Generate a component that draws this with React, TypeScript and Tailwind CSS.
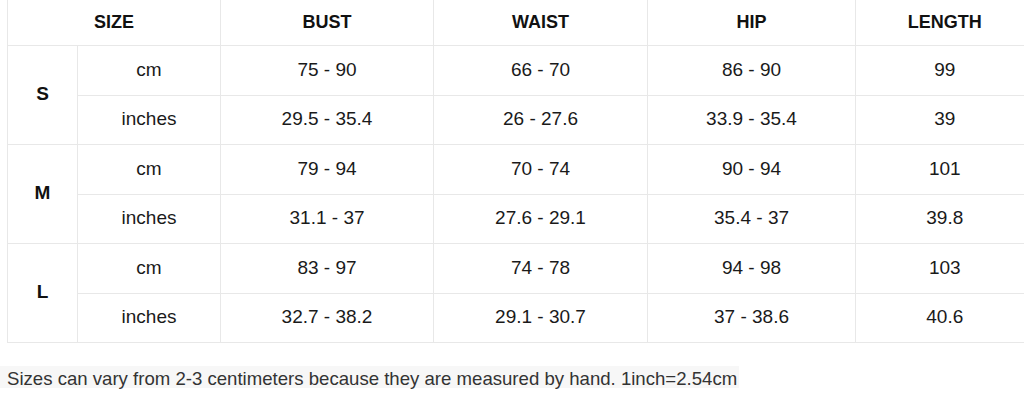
import React from "react";

type Row = {
  unit: string;
  bust: string;
  waist: string;
  hip: string;
  length: string;
};

type SizeGroup = {
  size: string;
  rows: Row[];
};

const sizes: SizeGroup[] = [
  {
    size: "S",
    rows: [
      { unit: "cm", bust: "75 - 90", waist: "66 - 70", hip: "86 - 90", length: "99" },
      { unit: "inches", bust: "29.5 - 35.4", waist: "26 - 27.6", hip: "33.9 - 35.4", length: "39" },
    ],
  },
  {
    size: "M",
    rows: [
      { unit: "cm", bust: "79 - 94", waist: "70 - 74", hip: "90 - 94", length: "101" },
      { unit: "inches", bust: "31.1 - 37", waist: "27.6 - 29.1", hip: "35.4 - 37", length: "39.8" },
    ],
  },
  {
    size: "L",
    rows: [
      { unit: "cm", bust: "83 - 97", waist: "74 - 78", hip: "94 - 98", length: "103" },
      { unit: "inches", bust: "32.7 - 38.2", waist: "29.1 - 30.7", hip: "37 - 38.6", length: "40.6" },
    ],
  },
];

const cell = "border border-[#e8e8e8] text-center align-middle";

export default function App() {
  return (
    <div className="w-[1024px] h-[403px] overflow-hidden bg-white font-['Liberation_Sans',Arial,sans-serif] text-[#1a1a1a]">
      <table className="ml-[7px] w-[1026px] table-fixed border-collapse">
        <colgroup>
          <col className="w-[70px]" />
          <col className="w-[143px]" />
          <col className="w-[213px]" />
          <col className="w-[214px]" />
          <col className="w-[208px]" />
          <col className="w-[178px]" />
        </colgroup>
        <thead>
          <tr className="h-[45px] text-[18px] font-bold text-[#111]">
            <th colSpan={2} className={`${cell} border-t-0`}>SIZE</th>
            <th className={`${cell} border-t-0`}>BUST</th>
            <th className={`${cell} border-t-0`}>WAIST</th>
            <th className={`${cell} border-t-0`}>HIP</th>
            <th className={`${cell} border-t-0 border-r-0`}>LENGTH</th>
          </tr>
        </thead>
        <tbody className="text-[19px]">
          {sizes.map((group) =>
            group.rows.map((row, i) => (
              <tr key={group.size + row.unit} className={i === 0 ? "h-[50px]" : "h-[49px]"}>
                {i === 0 && (
                  <td rowSpan={2} className={`${cell} font-bold text-[19px] text-[#111]`}>
                    {group.size}
                  </td>
                )}
                <td className={cell}>{row.unit}</td>
                <td className={cell}>{row.bust}</td>
                <td className={cell}>{row.waist}</td>
                <td className={cell}>{row.hip}</td>
                <td className={`${cell} border-r-0`}>{row.length}</td>
              </tr>
            ))
          )}
        </tbody>
      </table>
      <p className="mt-[23px] block w-fit h-[22px] bg-[#f7f7f7] pl-[7px] pr-[2px] pt-[2px] text-[18.6px] leading-[22px] text-[#333]">
        Sizes can vary from 2-3 centimeters because they are measured by hand. 1inch=2.54cm
      </p>
    </div>
  );
}
